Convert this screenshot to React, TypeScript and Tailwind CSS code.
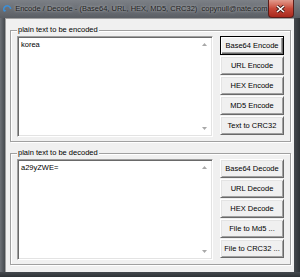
import React from "react";

const font = { fontFamily: "'Liberation Sans', Arial, sans-serif" };

function ScrollArrows() {
  return (
    <div className="flex w-[16px] flex-col items-center justify-between py-[6px]">
      <svg width="5" height="3" viewBox="0 0 5 3">
        <path d="M0 3 L2.5 0 L5 3 Z" fill="#a8a8a8" />
      </svg>
      <svg width="5" height="3" viewBox="0 0 5 3">
        <path d="M0 0 L2.5 3 L5 0 Z" fill="#a8a8a8" />
      </svg>
    </div>
  );
}

function Button({ label, focused }: { label: string; focused?: boolean }) {
  return (
    <div
      className={
        focused
          ? "flex h-[19px] w-[64px] items-center justify-center whitespace-nowrap border border-black bg-[#f0f0f0] text-[7.5px] text-black shadow-[inset_1px_1px_0_#ffffff,inset_-1px_-1px_0_#696969,inset_-2px_-2px_0_#a0a0a0]"
          : "flex h-[19px] w-[64px] items-center justify-center whitespace-nowrap border border-t-white border-l-white border-b-[#696969] border-r-[#696969] bg-[#f0f0f0] text-[7.5px] text-black shadow-[inset_1px_1px_0_#e3e3e3,inset_-1px_-1px_0_#a0a0a0]"
      }
    >
      {label}
    </div>
  );
}

function Group({
  title,
  text,
  buttons,
  focused,
}: {
  title: string;
  text: string;
  buttons: string[];
  focused?: boolean;
}) {
  return (
    <div className="relative h-[112px] w-[281px] border border-[#a0a0a0] shadow-[inset_1px_1px_0_#ffffff,1px_1px_0_#ffffff]">
      <span className="absolute -top-[6px] left-[6px] bg-[#f0f0f0] px-[1px] text-[7.5px] leading-[10px] text-black">
        {title}
      </span>
      <div className="flex gap-[7px] pl-[6px] pt-[5px]">
        <div className="flex h-[101px] w-[196px] border border-t-[#a0a0a0] border-l-[#a0a0a0] border-b-white border-r-white bg-white shadow-[inset_1px_1px_0_#696969,inset_-1px_-1px_0_#e3e3e3]">
          <div className="flex-1 pl-[3px] pt-[3px] text-[7.5px] leading-[10px] text-black">
            {text}
          </div>
          <ScrollArrows />
        </div>
        <div className="flex flex-col gap-[1px]">
          {buttons.map((b, i) => (
            <Button key={b} label={b} focused={focused && i === 0} />
          ))}
        </div>
      </div>
    </div>
  );
}

export default function App() {
  return (
    <div className="flex h-[277px] w-[300px] flex-col bg-[#555a60]" style={font}>
      {/* title bar */}
      <div className="flex h-[18px] items-center bg-gradient-to-b from-[#7c8086] to-[#5a5e64]">
        <svg width="12" height="12" viewBox="0 0 12 12" className="ml-[3px]">
          <path
            d="M2 9 A4.5 4.5 0 1 1 10 6"
            fill="none"
            stroke="#3d8fd6"
            strokeWidth="2"
          />
          <path d="M1 7 L2 10 L4.5 8 Z" fill="#3d8fd6" />
        </svg>
        <span className="ml-[3px] whitespace-nowrap text-[7.5px] text-[#1e1e1e] [text-shadow:0_0_3px_rgba(255,255,255,0.7)]">
          Encode / Decode - (Base64, URL, HEX, MD5, CRC32)&nbsp;&nbsp;copynull@nate.com
        </span>
        <div className="ml-auto mr-[6px] flex h-[18px] w-[34px] items-center justify-center self-start rounded-b-[4px] border border-t-0 border-[#5a1d1a] bg-gradient-to-b from-[#e19a8d] via-[#c8493a] to-[#a8281c]">
          <svg width="9" height="8" viewBox="0 0 9 8">
            <path d="M1 1 L8 7 M8 1 L1 7" stroke="#3a1410" strokeWidth="3" />
            <path d="M1 1 L8 7 M8 1 L1 7" stroke="#ffffff" strokeWidth="1.6" />
          </svg>
        </div>
      </div>
      {/* body */}
      <div className="flex flex-1">
        <div className="w-[5px] bg-gradient-to-r from-[#6c7076] to-[#45494e]" />
        <div className="flex flex-1 flex-col gap-[11px] bg-[#f0f0f0] pl-[5px] pt-[12px] shadow-[inset_1px_1px_0_#a0a0a0]">
          <Group
            title="plain text to be encoded"
            text="korea"
            focused
            buttons={["Base64 Encode", "URL Encode", "HEX Encode", "MD5 Encode", "Text to CRC32"]}
          />
          <Group
            title="plain text to be decoded"
            text="a29yZWE="
            buttons={["Base64 Decode", "URL Decode", "HEX Decode", "File to Md5 ...", "File to CRC32 ..."]}
          />
        </div>
        <div className="w-[6px] bg-gradient-to-r from-[#45494e] to-[#2e3236]" />
      </div>
      <div className="h-[5px] bg-gradient-to-b from-[#45494e] to-[#2e3236]" />
    </div>
  );
}
